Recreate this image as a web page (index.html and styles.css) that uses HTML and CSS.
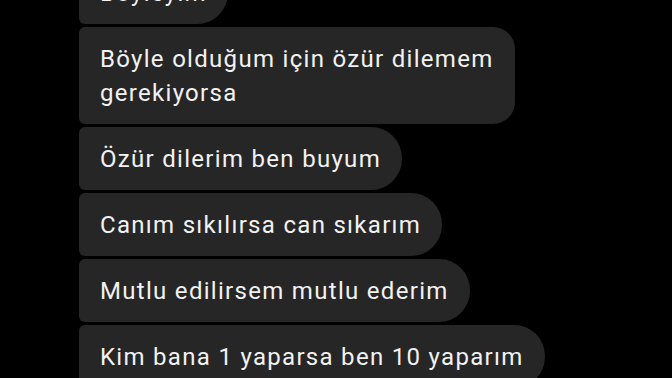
FILE: index.html
```html
<!DOCTYPE html>
<html lang="tr">
<head>
<meta charset="utf-8">
<link rel="stylesheet" href="styles.css">
</head>
<body>
<div class="thread">
  <div class="bubble">Böyleyim</div>
  <div class="bubble multi">Böyle olduğum için özür dilemem<br>gerekiyorsa</div>
  <div class="bubble">Özür dilerim ben buyum</div>
  <div class="bubble">Canım sıkılırsa can sıkarım</div>
  <div class="bubble">Mutlu edilirsem mutlu ederim</div>
  <div class="bubble">Kim bana 1 yaparsa ben 10 yaparım</div>
</div>
</body>
</html>
```
FILE: styles.css
```css
html, body {
  margin: 0;
  padding: 0;
  background: #000;
  height: 100%;
  overflow: hidden;
}
.thread {
  display: flex;
  flex-direction: column;
  align-items: flex-start;
  gap: 3px;
  padding-left: 79px;
  margin-top: -39px;
}
.bubble {
  background: #262626;
  color: #f2f2f2;
  font-family: Roboto, "Noto Sans", sans-serif;
  font-size: 24px;
  letter-spacing: 1.3px;
  line-height: 34px;
  padding: 14.5px 21px 14.5px 21px;
  border-radius: 6px 31px 31px 6px;
}
.bubble.multi {
  border-radius: 6px 22px 22px 6px;
}
```
